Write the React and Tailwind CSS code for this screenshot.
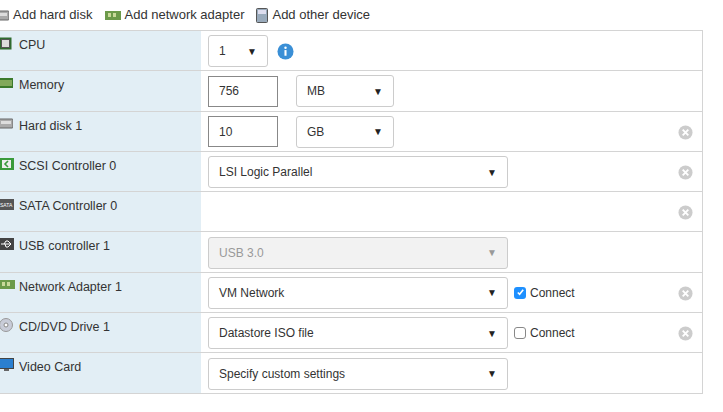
const Caret = () => <span className="text-[10px] text-[#222]">▼</span>;

function Sel({ w, children, disabled }) {
  return (
    <div className={`h-[32px] ${w} border border-[#ccc] rounded-[3px] flex items-center justify-between pl-[10px] pr-[10px] ${disabled ? 'bg-[#f2f2f2] text-[#999]' : 'bg-white text-[#333]'}`}>
      <span>{children}</span>
      {disabled ? <span className="text-[10px] text-[#999]">▼</span> : <Caret />}
    </div>
  );
}

function Input({ value }) {
  return <div className="h-[31px] w-[70px] border border-[#888] bg-white flex items-center pl-[10px] text-[#333]">{value}</div>;
}

function Remove() {
  return (
    <svg width="15" height="15" viewBox="0 0 16 16">
      <circle cx="8" cy="8" r="7.5" fill="#ccc" />
      <path d="M5 5l6 6M11 5l-6 6" stroke="#fff" strokeWidth="2" />
    </svg>
  );
}

function Check({ on }) {
  return on ? (
    <span className="w-[12px] h-[12px] rounded-[3px] bg-[#1e90ff] flex items-center justify-center">
      <svg width="9" height="9" viewBox="0 0 10 10"><path d="M2 5l2 2 4-5" stroke="#fff" strokeWidth="1.8" fill="none" /></svg>
    </span>
  ) : <span className="w-[12px] h-[12px] rounded-[3px] border border-[#888] bg-white" />;
}

const icons = {
  cpu: <svg width="13" height="13" viewBox="0 0 13 13"><rect x="0.5" y="0.5" width="12" height="12" fill="#2f6b2f" /><rect x="2.5" y="2.5" width="8" height="8" fill="#ddd" stroke="#555" /></svg>,
  mem: <svg width="14" height="10" viewBox="0 0 14 10"><rect width="14" height="10" fill="#3c7a2c" /><path d="M2 2v6M4 2v6M6 2v6M8 2v6M10 2v6M12 2v6" stroke="#c8d88a" strokeWidth="1" /></svg>,
  disk: <svg width="14" height="11" viewBox="0 0 14 11"><rect y="1" width="14" height="9" rx="1" fill="#aaa" stroke="#666" /><rect x="2" y="3" width="10" height="3" fill="#ddd" /></svg>,
  scsi: <svg width="15" height="12" viewBox="0 0 15 12"><rect width="15" height="12" fill="#3a9a3a" /><rect x="3" y="2" width="9" height="8" fill="#eee" /><path d="M9 3L6 6l3 3" stroke="#3a9a3a" strokeWidth="1.6" fill="none" /></svg>,
  sata: <svg width="15" height="11" viewBox="0 0 15 11"><rect width="15" height="11" fill="#555" /><text x="1" y="8" fontSize="5" fill="#fff" fontFamily="Liberation Sans">SATA</text></svg>,
  usb: <svg width="15" height="12" viewBox="0 0 15 12"><rect width="15" height="12" fill="#444" /><path d="M2 6h10M9 3l3 3-3 3M5 6l2-3h2M6 6l1 3h2" stroke="#fff" strokeWidth="1" fill="none" /></svg>,
  net: <svg width="16" height="9" viewBox="0 0 16 9"><rect width="16" height="9" fill="#6c9a4a" /><rect x="3" y="2" width="3" height="4" fill="#c9d99a" /><rect x="8" y="2" width="3" height="4" fill="#c9d99a" /></svg>,
  cd: <svg width="14" height="14" viewBox="0 0 14 14"><circle cx="7" cy="7" r="6.5" fill="#c8ccd8" stroke="#999" /><circle cx="7" cy="7" r="2" fill="#fff" stroke="#888" /></svg>,
  video: <svg width="15" height="14" viewBox="0 0 15 14"><rect x="0.5" y="0.5" width="14" height="10" fill="#2a7fd0" stroke="#444" /><rect x="5" y="11" width="5" height="2" fill="#666" /></svg>,
};

const rows = [
  { icon: 'cpu', label: 'CPU', content: <><Sel w="w-[60px]">1</Sel><svg className="ml-[9px]" width="17" height="17" viewBox="0 0 18 18"><circle cx="9" cy="9" r="8.5" fill="#3a8fd6" /><circle cx="9" cy="5" r="1.3" fill="#fff" /><rect x="7.9" y="7.5" width="2.2" height="6" fill="#fff" /></svg></> },
  { icon: 'mem', label: 'Memory', content: <><Input value="756" /><div className="ml-[18px]"><Sel w="w-[98px]">MB</Sel></div></> },
  { icon: 'disk', label: 'Hard disk 1', content: <><Input value="10" /><div className="ml-[18px]"><Sel w="w-[98px]">GB</Sel></div></>, rm: true },
  { icon: 'scsi', label: 'SCSI Controller 0', content: <Sel w="w-[300px]">LSI Logic Parallel</Sel>, rm: true },
  { icon: 'sata', label: 'SATA Controller 0', content: null, rm: true },
  { icon: 'usb', label: 'USB controller 1', content: <Sel w="w-[300px]" disabled>USB 3.0</Sel> },
  { icon: 'net', label: 'Network Adapter 1', content: <><Sel w="w-[300px]">VM Network</Sel><span className="ml-[6px] flex items-center gap-[4px]"><Check on />Connect</span></>, rm: true },
  { icon: 'cd', label: 'CD/DVD Drive 1', content: <><Sel w="w-[300px]">Datastore ISO file</Sel><span className="ml-[6px] flex items-center gap-[4px]"><Check />Connect</span></>, rm: true },
  { icon: 'video', label: 'Video Card', content: <Sel w="w-[300px]">Specify custom settings</Sel> },
];

export default function App() {
  return (
    <div className="w-[723px] h-[412px] bg-white text-[12px] text-[#333] overflow-hidden" style={{ fontFamily: '"Liberation Sans", Arial, sans-serif' }}>
      <div className="h-[30px] flex items-center gap-[12px] pl-0 text-[13px]">
        <span className="flex items-center gap-[4px] -ml-[5px]">{icons.disk}Add hard disk</span>
        <span className="flex items-center gap-[4px]">{icons.net}Add network adapter</span>
        <span className="flex items-center gap-[4px]"><svg width="12" height="15" viewBox="0 0 12 15"><rect x="0.5" y="0.5" width="11" height="14" rx="1" fill="#9ab" stroke="#555" /><rect x="2" y="2" width="8" height="4" fill="#dde" /></svg>Add other device</span>
      </div>
      <div className="w-[703px] border-t border-[#d4d4d4]">
        {rows.map((r) => (
          <div key={r.label} className="flex h-[40.3px] border-b border-[#d4d4d4] border-r">
            <div className="w-[202px] bg-[#e2eef5] flex items-start pt-[5px] gap-[4px] -ml-[1px] text-[12.5px]">
              <span className="w-[16px] h-[14px] flex items-center">{icons[r.icon]}</span>
              {r.label}
            </div>
            <div className="flex-1 flex items-center pl-[7px] pt-[1px] relative">
              {r.content}
              {r.rm && <span className="absolute right-[9px] top-[13px]"><Remove /></span>}
            </div>
          </div>
        ))}
      </div>
    </div>
  );
}
